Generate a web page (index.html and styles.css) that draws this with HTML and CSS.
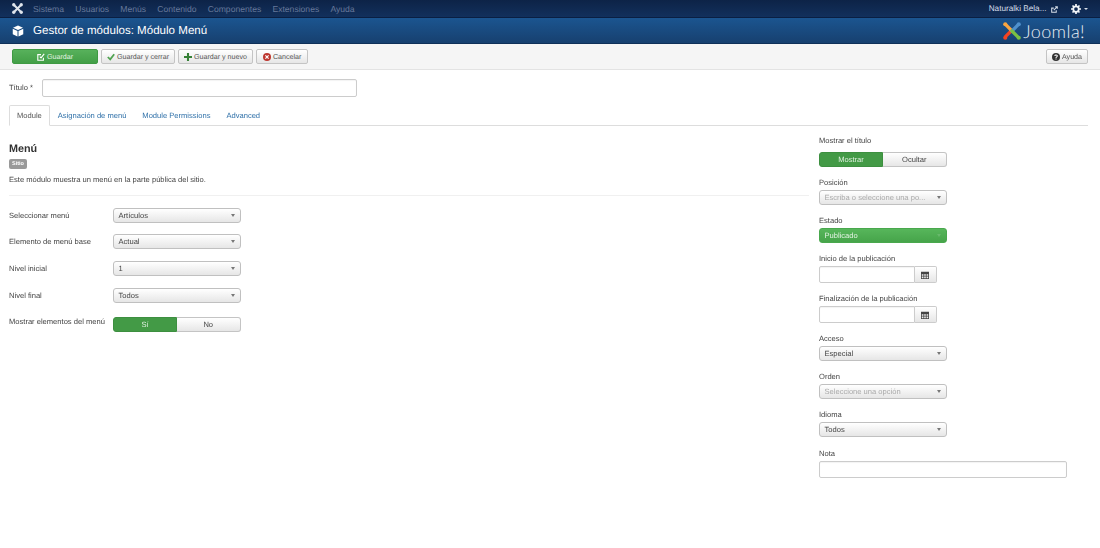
FILE: index.html
```html
<!DOCTYPE html>
<html lang="es">
<head>
<meta charset="utf-8">
<title>Gestor de módulos: Módulo Menú</title>
<link rel="stylesheet" href="styles.css">
</head>
<body>
<nav class="topbar">
  <svg class="jlogo" width="11" height="11" viewBox="0 0 22 22"><g fill="none" stroke="#dfe5ec" stroke-width="4.200" stroke-linecap="round"><path d="M4 4l14 14M18 4L4 18"/></g><g fill="#dfe5ec"><circle cx="3.500" cy="3.500" r="3.300"/><circle cx="18.500" cy="3.500" r="3.300"/><circle cx="3.500" cy="18.500" r="3.300"/><circle cx="18.500" cy="18.500" r="3.300"/></g></svg>
  <a class="navlink">Sistema</a>
  <a class="navlink">Usuarios</a>
  <a class="navlink">Menús</a>
  <a class="navlink">Contenido</a>
  <a class="navlink">Componentes</a>
  <a class="navlink">Extensiones</a>
  <a class="navlink">Ayuda</a>
  <span class="spacer"></span>
  <span class="site">Naturalki Bela...</span>
  <svg class="ext" width="7" height="7" viewBox="0 0 10 10"><path fill="none" stroke="#d5dde8" stroke-width="1.500" d="M7.500 6v3H1V3h3M4 6l5-5M6 1h3v3"/></svg>
  <svg class="gear" width="10" height="10" viewBox="0 0 20 20"><circle cx="10" cy="10" r="5.500" fill="none" stroke="#f2f5f8" stroke-width="3.500"/><path stroke="#f2f5f8" stroke-width="3.400" d="M10 0v4M10 16v4M0 10h4M16 10h4M3 3l3 3M14 14l3 3M17 3l-3 3M6 14l-3 3"/></svg>
  <span class="caret-w"></span>
</nav>
<header class="titlebar">
  <svg class="cube" width="12" height="12" viewBox="0 0 24 24"><path fill="#fff" d="M12 1l10 4.500L12 10 2 5.500zM1.500 7.500L11 12v11l-9.500-4.500zM22.500 7.500V18.500L13 23V12z"/></svg>
  <h1>Gestor de módulos: Módulo Menú</h1>
  <span class="spacer"></span>
  <div class="brand">
    <svg width="18" height="18" viewBox="0 0 20 20">
      <g fill="none" stroke-width="3.600" stroke-linecap="round">
        <path stroke="#f44321" d="M3 16l6-6"/><path stroke="#f9a541" d="M3 3l7 7"/>
        <path stroke="#5091cd" d="M17 3l-7 7"/><path stroke="#7ac143" d="M10 10l7 7"/>
      </g>
      <circle cx="2.500" cy="2.500" r="2.300" fill="#f9a541"/><circle cx="17.500" cy="2.500" r="2.300" fill="#5091cd"/><circle cx="2.500" cy="17.500" r="2.300" fill="#f44321"/><circle cx="17.500" cy="17.500" r="2.300" fill="#7ac143"/>
    </svg>
    <span class="brandname">Joomla!</span>
  </div>
</header>
<div class="toolbar">
  <button class="btn btn-save"><svg width="8" height="8" viewBox="0 0 10 10"><path fill="none" stroke="#fff" stroke-width="1.400" d="M8 6v3H1V2h4M3.500 4.500L5 6l4-5"/></svg>Guardar</button>
  <button class="btn"><svg width="8" height="8" viewBox="0 0 10 10"><path fill="none" stroke="#51a351" stroke-width="2.200" d="M1 5l3 3 5-6.500"/></svg>Guardar y cerrar</button>
  <button class="btn"><svg width="8" height="8" viewBox="0 0 10 10"><path fill="none" stroke="#378137" stroke-width="2.600" d="M5 0v10M0 5h10"/></svg>Guardar y nuevo</button>
  <button class="btn btn-cancel"><svg width="8" height="8" viewBox="0 0 10 10"><circle cx="5" cy="5" r="5" fill="#bd362f"/><path stroke="#fff" stroke-width="1.500" d="M3 3l4 4M7 3l-4 4"/></svg>Cancelar</button>
  <span class="spacer"></span>
  <button class="btn"><svg width="8" height="8" viewBox="0 0 10 10"><circle cx="5" cy="5" r="5" fill="#333"/><path fill="none" stroke="#fff" stroke-width="1.300" d="M3.500 3.800C3.700 2 7 2.300 6.600 4 6.400 5 5 5 5 6.300M5 7v1"/></svg>Ayuda</button>
</div>
<main class="content">
  <div class="title-row">
    <label class="title-label">Título *</label>
    <div class="input title-input"></div>
  </div>
  <div class="tabs">
    <a class="tab active">Module</a>
    <a class="tab">Asignación de menú</a>
    <a class="tab">Module Permissions</a>
    <a class="tab">Advanced</a>
  </div>
  <div class="columns">
    <section class="left">
      <h2>Menú</h2>
      <span class="badge">Sitio</span>
      <p class="desc">Este módulo muestra un menú en la parte pública del sitio.</p>
      <hr class="rule">
      <div class="field"><span class="flabel">Seleccionar menú</span><div class="select"><span>Artículos</span><i class="arrow"></i></div></div>
      <div class="field"><span class="flabel">Elemento de menú base</span><div class="select"><span>Actual</span><i class="arrow"></i></div></div>
      <div class="field"><span class="flabel">Nivel inicial</span><div class="select"><span>1</span><i class="arrow"></i></div></div>
      <div class="field"><span class="flabel">Nivel final</span><div class="select"><span>Todos</span><i class="arrow"></i></div></div>
      <div class="field field-toggle"><span class="flabel">Mostrar elementos del menú</span><div class="toggle"><span class="on">Sí</span><span class="off">No</span></div></div>
    </section>
    <aside class="right">
      <div class="rlabel r-first">Mostrar el título</div>
      <div class="toggle"><span class="on">Mostrar</span><span class="off">Ocultar</span></div>
      <div class="rlabel">Posición</div>
      <div class="select muted"><span>Escriba o seleccione una po...</span><i class="arrow"></i></div>
      <div class="rlabel">Estado</div>
      <div class="select green"><span>Publicado</span><i class="arrow"></i></div>
      <div class="rlabel">Inicio de la publicación</div>
      <div class="date"><div class="input"></div><div class="cal"><svg width="8" height="8" viewBox="0 0 10 10"><path fill="#444" d="M0 1h10v9H0zM1 4v2h2V4zm3 0v2h2V4zm3 0v2h2V4zM1 7v2h2V7zm3 0v2h2V7zm3 0v2h2V7z"/></svg></div></div>
      <div class="rlabel">Finalización de la publicación</div>
      <div class="date"><div class="input"></div><div class="cal"><svg width="8" height="8" viewBox="0 0 10 10"><path fill="#444" d="M0 1h10v9H0zM1 4v2h2V4zm3 0v2h2V4zm3 0v2h2V4zM1 7v2h2V7zm3 0v2h2V7zm3 0v2h2V7z"/></svg></div></div>
      <div class="rlabel">Acceso</div>
      <div class="select"><span>Especial</span><i class="arrow"></i></div>
      <div class="rlabel">Orden</div>
      <div class="select muted"><span>Seleccione una opción</span><i class="arrow"></i></div>
      <div class="rlabel">Idioma</div>
      <div class="select"><span>Todos</span><i class="arrow"></i></div>
      <div class="rlabel r-note">Nota</div>
      <div class="input note"></div>
    </aside>
  </div>
</main>
</body>
</html>
```
FILE: styles.css
```css
* { box-sizing: border-box; }
html, body { margin: 0; padding: 0; }
body { width: 1100px; height: 548px; overflow: hidden; background: #fff; color: #555; font: 7.570px/12px "Liberation Sans", Arial, sans-serif; text-rendering: geometricPrecision; filter: blur(0.3px); }
.spacer { flex: 1; }

.topbar { height: 18px; display: flex; align-items: center; padding: 0 12px 0 12px; background: linear-gradient(#0d2347, #12305c); border-bottom: 1px solid #0a1f42; }
.jlogo { margin-right: 10px; }
.navlink { font-size: 8.600px; color: #66789a; margin-right: 11.200px; }
.site { font-size: 8.200px; color: #d5dde8; }
.ext { margin: 1px 0 0 4px; }
.gear { margin-left: 13.500px; }
.caret-w { margin-left: 3px; border: 2.500px solid transparent; border-top-color: #d5dde8; border-bottom: 0; }

.titlebar { height: 26px; display: flex; align-items: center; padding: 0 15px 0 12px; background: linear-gradient(#1b5590, #17406f); border-bottom: 1px solid #0f3058; }
.cube { margin-right: 9px; }
h1 { margin: 0; font-size: 11.570px; font-weight: 400; color: #fff; line-height: 16px; }
.brand { display: flex; align-items: center; gap: 2px; }
.brandname { font: 300 18px/20px Lato, sans-serif; letter-spacing: .4px; color: #e8eef5; }

.toolbar { height: 26px; display: flex; align-items: center; gap: 3px; padding: 0 12px; background: #f5f5f5; border-bottom: 1px solid #e3e3e3; }
.btn { height: 15px; padding: 0 5px; display: flex; align-items: center; justify-content: center; gap: 2px; border: 1px solid #c4c4c4; border-radius: 2px; background: linear-gradient(#fff, #e6e6e6); color: #555; font: 7.100px/12px "Liberation Sans", Arial, sans-serif; text-rendering: geometricPrecision; }
.btn-save { width: 86px; border-color: #3f9a43; background: linear-gradient(#57b15b, #439f47); color: #e4f3e4; }
.btn-cancel { padding: 0 6px; }

.content { padding: 0 12px 0 9px; }
.title-row { display: flex; align-items: center; height: 18px; margin-top: 9px; }
.title-label { width: 32.500px; color: #444; }
.input { height: 18px; background: #fff; border: 1px solid #ccc; border-radius: 2px; box-shadow: inset 0 1px 1px rgba(0,0,0,.05); }
.title-input { width: 315px; }

.tabs { display: flex; height: 21px; margin-top: 8px; border-bottom: 1px solid #ddd; }
.tab { padding: 0 8px; height: 21px; line-height: 21px; color: #3071a9; }
.tab.active { padding: 0 7px; margin-right: 0; color: #555; line-height: 19px; background: #fff; border: 1px solid #ddd; border-bottom-color: #fff; border-radius: 2px 2px 0 0; }

.columns { display: flex; }
.left { width: 800px; padding-top: 16px; }
.right { margin-left: 10px; width: 248px; padding-top: 9px; }
h2 { margin: 0; font-size: 10.800px; line-height: 15px; color: #333; font-weight: 700; }
.badge { display: block; width: 18px; height: 10px; margin-top: 2px; background: #999; border-radius: 2px; color: #fff; font-size: 5.500px; line-height: 10px; font-weight: 700; text-align: center; }
.desc { margin: 5px 0 0; color: #444; line-height: 12px; }
.rule { margin: 9px 0 11.500px; border: 0; border-top: 1px solid #f0f0f0; }

.field { display: flex; align-items: flex-start; height: 15px; margin-bottom: 11.700px; }
.flabel { width: 104px; color: #444; white-space: nowrap; line-height: 15px; }
.field-toggle { height: 18px; margin-bottom: 0; }
.field-toggle .toggle { margin-top: 2.500px; }
.select { position: relative; height: 15px; width: 127.500px; padding: 0 4.500px; line-height: 13px; color: #444; background: linear-gradient(#fff, #e6e6e6); border: 1px solid #c0c0c0; border-radius: 3px; }
.select.muted { color: #aaa; }
.select.green { color: #e4f3e4; background: linear-gradient(#57b65b, #46a44a); border-color: #49a84d; }
.arrow { position: absolute; right: 5px; top: 5px; border: 2.500px solid transparent; border-top: 3px solid #777; border-bottom: 0; }
.green .arrow { border-top-color: #68b86b; }

.toggle { display: flex; width: 127.500px; height: 15px; line-height: 13px; text-align: center; }
.toggle .on { width: 64px; background: #439a46; color: #dfefdf; border-radius: 3px 0 0 3px; border: 1px solid #3d8f40; }
.toggle .off { width: 63.500px; background: linear-gradient(#fff, #e6e6e6); color: #444; border: 1px solid #c4c4c4; border-left: 0; border-radius: 0 3px 3px 0; }

.rlabel { height: 12px; margin-top: 9.500px; margin-bottom: 1.500px; color: #444; line-height: 12px; }
.r-first { margin-top: 0; margin-bottom: 5px; }
.r-note { margin-top: 10.500px; }
.date { display: flex; width: 118px; }
.date .input { height: 17px; flex: 1; border-radius: 2px 0 0 2px; }
.cal { width: 22.500px; height: 17px; display: flex; align-items: center; justify-content: center; border: 1px solid #ccc; border-left: 0; border-radius: 0 2px 2px 0; background: linear-gradient(#fff, #e6e6e6); }
.note { width: 248px; height: 16.500px; }
```
